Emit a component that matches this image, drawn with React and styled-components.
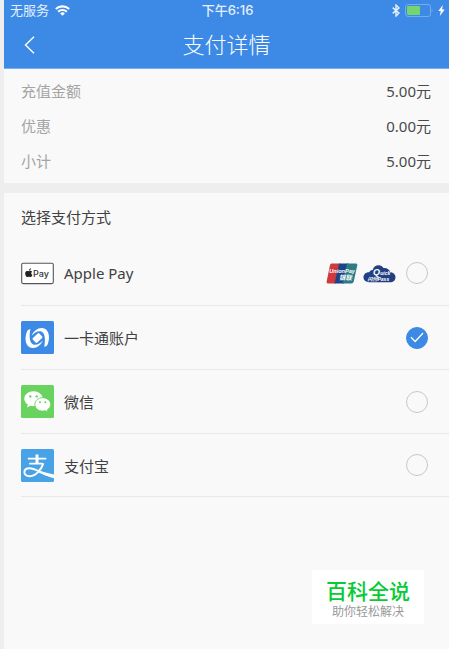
import React, { useState } from "react";
import styled, { createGlobalStyle } from "styled-components";

const GlobalStyle = createGlobalStyle`
  * {
    box-sizing: border-box;
  }
  body {
    margin: 0;
    background: #eeeeee;
    color: #414141;
    font-family: "Noto Sans", "Noto Sans CJK SC", sans-serif;
    font-size: 15px;
  }
`;

const Page = styled.div`
  position: relative;
  min-height: 100vh;
  margin-left: 4px;
  background: #f9f9f9;
`;
const Header = styled.header`
  padding-bottom: 4px;
  background: #3c8ae5;
  border-bottom: 1px solid #79aeed;
  color: #fff;
`;
const StatusBar = styled.div`
  display: grid;
  grid-template-columns: 1fr auto 1fr;
  align-items: center;
  height: 20px;
  padding: 0 4px 0 6px;
  font-size: 13px;
  line-height: 20px;
  color: #e6f0fc;
`;
const StatusGroup = styled.div`
  display: flex;
  align-items: center;
  justify-content: ${(props) => (props.$end ? "flex-end" : "flex-start")};
  gap: ${(props) => (props.$end ? "5px" : "6px")};
`;
const Time = styled.span`
  font-family: Inter, "Noto Sans CJK SC", sans-serif;
  font-weight: 500;
`;
const NavBar = styled.div`
  display: grid;
  grid-template-columns: 52px 1fr 52px;
  align-items: center;
  height: 44px;
  padding-top: 4px;
`;
const BackButton = styled.button`
  display: flex;
  align-items: center;
  height: 40px;
  padding: 2px 0 0 20px;
  border: 0;
  background: none;
  color: inherit;
`;
const Title = styled.h1`
  margin: 0;
  font-size: 22px;
  font-weight: 300;
  line-height: 32px;
  text-align: center;
`;
const Summary = styled.dl`
  margin: 0;
  padding: 4px 18px 5px 17px;
  border-bottom: 10px solid #eeeeee;
`;
const SummaryRow = styled.div`
  display: flex;
  align-items: center;
  justify-content: space-between;
  height: 35px;
  line-height: 20px;
`;
const SummaryLabel = styled.dt`
  color: #a4a4a4;
`;
const SummaryValue = styled.dd`
  margin: 0;
  color: #4a4a4a;
`;
const Methods = styled.fieldset`
  margin: 0;
  padding: 0 0 0 17px;
  border: 0;
`;
const MethodsTitle = styled.legend`
  height: 48px;
  padding: 0;
  line-height: 48px;
`;
const Method = styled.label`
  display: flex;
  align-items: center;
  gap: 10px;
  min-height: 64px;
  padding-right: 21px;
  cursor: pointer;

  & + & {
    border-top: 1px solid #e8e8e8;
  }
  &:last-child {
    border-bottom: 1px solid #e8e8e8;
  }
`;
const MethodName = styled.span`
  flex: 1;
`;
const Badges = styled.span`
  display: flex;
  align-items: center;
  gap: 5px;
`;
const RadioWrap = styled.span`
  display: grid;
  place-items: center;

  & > * {
    grid-area: 1 / 1;
  }
  svg {
    pointer-events: none;
  }
`;
const Radio = styled.input`
  appearance: none;
  width: 22px;
  height: 22px;
  margin: 0;
  border: 1px solid #c8c8c8;
  border-radius: 50%;

  &:checked {
    border-color: #3c8ae5;
    background: #3c8ae5;
  }
`;
const Promo = styled.aside`
  position: absolute;
  right: 25px;
  bottom: 25px;
  padding: 7px 14px 5px;
  background: #fff;
  text-align: center;
`;
const PromoName = styled.strong`
  display: block;
  color: #06cb35;
  font-size: 21px;
  font-weight: 500;
  line-height: 28px;
`;
const PromoText = styled.span`
  display: block;
  color: #999999;
  font-size: 12px;
  line-height: 14px;
`;

const WifiIcon = () => (
  <svg width="15" height="11" viewBox="0 0 15 11" fill="none" stroke="#fff" strokeWidth="2.1">
    <path d="M.8 4.100a9.600 9.600 0 0 1 13.400 0M3.200 6.700a6.100 6.100 0 0 1 8.600 0" />
    <path d="M5.100 8.400a3.500 3.500 0 0 1 4.800 0L7.500 10.800z" fill="#fff" stroke="none" />
  </svg>
);

const BluetoothIcon = () => (
  <svg width="8" height="13" viewBox="0 0 8 13" fill="none" stroke="#e6f0fc" strokeWidth="1.4">
    <path d="M.7 3.6 7 9.1 4 12V1l3 2.9L.7 9.4" />
  </svg>
);

const BatteryIcon = () => (
  <svg width="28" height="13" viewBox="0 0 28 13">
    <rect x=".5" y=".5" width="25" height="12" rx="2.5" fill="none" stroke="#75acee" />
    <path d="M26.7 4.5q1.6 2 0 4z" fill="#75acee" />
    <rect x="2" y="2" width="13" height="9" rx="1" fill="#74d66d" />
  </svg>
);

const BoltIcon = () => (
  <svg width="7" height="11" viewBox="0 0 7 11">
    <path d="M4.8 0 .3 6h2.5L1.8 11 6.7 4.6H4.1z" fill="#fff" />
  </svg>
);

const BackIcon = () => (
  <svg width="11" height="18" viewBox="0 0 11 18" fill="none" stroke="#fff" strokeWidth="1.4">
    <path d="M10 .8 1.5 9l8.5 8.2" />
  </svg>
);

const ApplePayIcon = () => (
  <svg width="33" height="33" viewBox="0 0 33 33">
    <rect x=".7" y="6.2" width="31.6" height="20.4" rx="1.5" fill="#fff" stroke="#555" strokeWidth="1.1" />
    <path
      d="M7.9 14.2c.9 0 1.3-.6 2.2-.2.5.1.8.4 1 .7-1.3.8-1.1 2.6.3 3.2-.5 1.2-1.2 2.2-1.9 2.2-.6 0-.8-.3-1.6-.3s-1 .3-1.5.3c-1.4 0-3.4-4.3-1.4-5.7 1.1-.8 2-.2 2.9-.2zM8 13.6c0-1.3.9-2.2 2-2.4.1 1.2-.8 2.3-2 2.4z"
      fill="#222"
    />
    <text x="12" y="19.8" fontFamily="Inter, sans-serif" fontSize="9" fontWeight="500" fill="#333">
      Pay
    </text>
  </svg>
);

const CardIcon = () => (
  <svg width="33" height="33" viewBox="0 0 33 33">
    <rect width="33" height="33" rx="1.5" fill="#3c8ae5" />
    <path
      d="M9.4 8.2C8.1 14.5 8.2 21.5 12.2 23.5c3.2 1.2 6.9-.9 9.7-4.3-1.9 5-6.3 8.2-10.9 7.7C4.3 26 3 17 6.2 9.9c.7-1.2 1.8-1.7 3.2-1.7z"
      fill="#fff"
    />
    <path
      d="M23.2 25.8c1.3-6.3 1.2-13.3-2.8-15.3-3.2-1.2-6.9.9-9.7 4.3 1.9-5 6.3-8.2 10.9-7.7 6.7.9 8 9.9 4.8 17-.7 1.2-1.8 1.7-3.2 1.7z"
      fill="#fff"
    />
    <rect x="12" y="13.8" width="9" height="6.4" rx="1.2" transform="rotate(-43 16.5 17)" fill="#fff" />
  </svg>
);

const WechatIcon = () => (
  <svg width="33" height="33" viewBox="0 0 33 33">
    <rect width="33" height="33" rx="1.5" fill="#68d35f" />
    <path
      d="M12.5 6.2C7.4 6.2 3.3 9.5 3.3 13.7c0 2.4 1.3 4.4 3.5 5.8l-.8 3 3.3-1.8c1.3.4 2.5.5 3.9.4 5-.4 8.5-3.5 8.5-7.4 0-4.2-4.1-7.5-9.2-7.5z"
      fill="#fff"
    />
    <path
      d="M21.7 12.7c-4.3 0-7.9 3-7.9 6.7 0 3.8 3.6 6.7 7.9 6.7 1 0 1.9-.1 2.8-.4l2.6 1.5-.7-2.5c2-1.3 3.3-3.1 3.3-5.3 0-3.7-3.6-6.7-8-6.7z"
      fill="#fff"
      stroke="#68d35f"
      strokeWidth=".9"
    />
    <g fill="#68d35f">
      <circle cx="9.3" cy="11.4" r="1.2" />
      <circle cx="15.7" cy="11.4" r="1.2" />
      <circle cx="19" cy="17.3" r="1" />
      <circle cx="24.3" cy="17.3" r="1" />
    </g>
  </svg>
);

const AlipayIcon = () => (
  <svg width="33" height="33" viewBox="0 0 33 33">
    <rect width="33" height="33" rx="1.5" fill="#48a2e6" />
    <g fill="none" stroke="#fff">
      <path d="M16 5.5v9.2" strokeWidth="3" />
      <path d="M6.8 9.6h18.5M8.2 14.7h13.5" strokeWidth="1.8" />
      <path
        d="M22.3 14.3c-1.4 5.8-7.5 12.7-13.5 12.9-3.6.1-5.4-1.8-5.4-4 0-2.4 2.1-3.9 5.1-3.9 5.2 0 10.5 4.2 18 6.8"
        strokeWidth="2"
      />
    </g>
    <path d="M17.5 21.1c4.5 2 9.5 3.3 15.5 4.5v3.7c-5.5-1.5-12-4.5-16.8-6.9z" fill="#fff" />
  </svg>
);

const UnionPayLogo = () => (
  <svg width="32" height="21" viewBox="0 0 32 21">
    <path d="M5.5.5H14L9.5 20.5H2q-1.8 0-1.4-1.8L4 2Q4.3.5 5.5.5z" fill="#cf3a3d" />
    <path d="M13 .5h9.5L18 20.5H8.5z" fill="#1d4586" />
    <path d="M21 .5h9q1.7 0 1.3 1.7l-3.6 16.6q-.4 1.7-2.2 1.7h-9z" fill="#2d7d86" />
    <g fill="#fff" fontWeight="700" fontStyle="italic">
      <text x="3.2" y="9.8" fontFamily="Liberation Sans, sans-serif" fontSize="5.6">
        UnionPay
      </text>
      <text x="13" y="17" fontFamily="Noto Sans CJK SC, sans-serif" fontSize="6.4">
        银联
      </text>
    </g>
  </svg>
);

const QuickPassLogo = () => (
  <svg width="33" height="21" viewBox="0 0 33 21">
    <path
      d="M6 19.2c-3.3 0-5.5-2-5.5-4.9 0-3 2.2-5.2 5.7-5.1C7 7.5 8.4 6.8 9.700 6.900 10.500 3.800 12.500 2.200 15.500 2.200c2.300 0 4 1 5 2.900 3.400-.4 6.100 1.500 6.600 4.100 3.200.1 5.400 2.100 5.400 5 0 3-2.200 5-5.500 5z"
      fill="#233f83"
    />
    <g fill="#fff" fontFamily="Liberation Sans, Noto Sans CJK SC, sans-serif" fontStyle="italic" fontWeight="700">
      <text x="10" y="11.8" fontSize="9">
        Q
      </text>
      <text x="17.2" y="12" fontSize="5">
        uick
      </text>
      <text x="4.5" y="17.6" fontSize="5">
        闪付Pass
      </text>
    </g>
  </svg>
);

const CheckIcon = () => (
  <svg width="14" height="11" viewBox="0 0 14 11" fill="none" stroke="#fff" strokeWidth="1.3">
    <path d="M1 5.3 5.2 9.5 13 1" />
  </svg>
);

const summary = [
  { label: "充值金额", value: "5.00元" },
  { label: "优惠", value: "0.00元" },
  { label: "小计", value: "5.00元" },
];

const methods = [
  { id: "apple", name: "Apple Pay", icon: <ApplePayIcon />, badges: true },
  { id: "card", name: "一卡通账户", icon: <CardIcon /> },
  { id: "wechat", name: "微信", icon: <WechatIcon /> },
  { id: "alipay", name: "支付宝", icon: <AlipayIcon /> },
];

const App = () => {
  const [selected, setSelected] = useState("card");

  return (
    <>
      <GlobalStyle />
      <Page>
        <Header>
          <StatusBar>
            <StatusGroup>
              <span>无服务</span>
              <WifiIcon />
            </StatusGroup>
            <Time>下午6:16</Time>
            <StatusGroup $end>
              <BluetoothIcon />
              <BatteryIcon />
              <BoltIcon />
            </StatusGroup>
          </StatusBar>
          <NavBar>
            <BackButton type="button" aria-label="返回">
              <BackIcon />
            </BackButton>
            <Title>支付详情</Title>
          </NavBar>
        </Header>

        <Summary>
          {summary.map((item) => (
            <SummaryRow key={item.label}>
              <SummaryLabel>{item.label}</SummaryLabel>
              <SummaryValue>{item.value}</SummaryValue>
            </SummaryRow>
          ))}
        </Summary>

        <Methods>
          <MethodsTitle>选择支付方式</MethodsTitle>
          {methods.map((method) => (
            <Method key={method.id} htmlFor={method.id}>
              {method.icon}
              <MethodName>{method.name}</MethodName>
              {method.badges && (
                <Badges>
                  <UnionPayLogo />
                  <QuickPassLogo />
                </Badges>
              )}
              <RadioWrap>
                <Radio
                  type="radio"
                  name="method"
                  id={method.id}
                  checked={selected === method.id}
                  onChange={() => setSelected(method.id)}
                />
                {selected === method.id && <CheckIcon />}
              </RadioWrap>
            </Method>
          ))}
        </Methods>

        <Promo>
          <PromoName>百科全说</PromoName>
          <PromoText>助你轻松解决</PromoText>
        </Promo>
      </Page>
    </>
  );
};

export default App;
